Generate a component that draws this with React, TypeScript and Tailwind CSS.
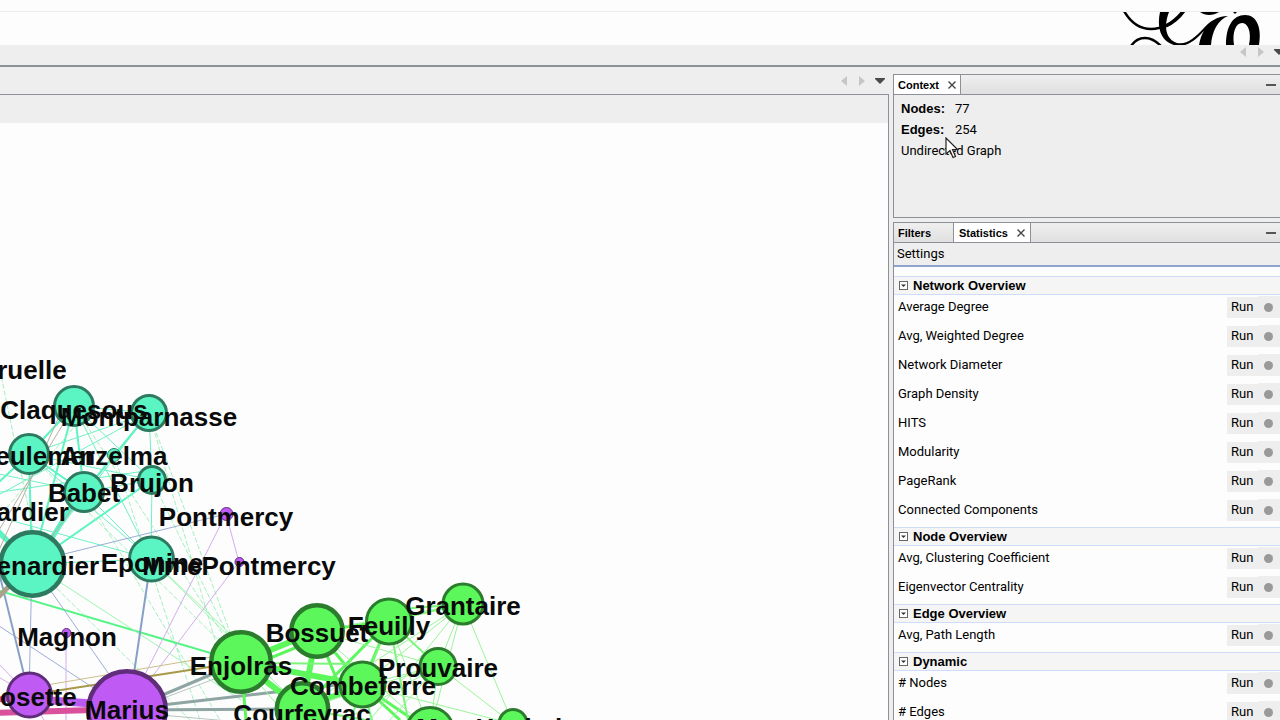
import React from 'react';

interface GraphNode {
  id: string;
  x: number;
  y: number;
  r: number;
  group: 'teal' | 'green' | 'purple';
}

interface GraphLabel {
  text: string;
  x: number;
  y: number;
}

interface StatSection {
  title: string;
  items: string[];
}

const groupColors = {
  teal: { fill: '#5bf4c3', stroke: '#2d7a61' },
  green: { fill: '#5bf75b', stroke: '#2b7c2d' },
  purple: { fill: '#bf5af5', stroke: '#602d7a' },
};

const nodes: GraphNode[] = [
  { id: 'claquesous', x: 74, y: 406, r: 21, group: 'teal' },
  { id: 'montparnasse', x: 149, y: 413, r: 19, group: 'teal' },
  { id: 'gueulemer', x: 29, y: 454, r: 21, group: 'teal' },
  { id: 'anzelma', x: 114, y: 455, r: 7, group: 'teal' },
  { id: 'brujon', x: 152, y: 480, r: 15, group: 'teal' },
  { id: 'babet', x: 84, y: 492, r: 21, group: 'teal' },
  { id: 'thenardier', x: 32.5, y: 564, r: 34, group: 'teal' },
  { id: 'eponine', x: 151.5, y: 559, r: 23.5, group: 'teal' },
  { id: 'pontmercy', x: 226.5, y: 514, r: 7, group: 'purple' },
  { id: 'mmePontmercy', x: 239.5, y: 562, r: 5, group: 'purple' },
  { id: 'magnon', x: 66.5, y: 633, r: 5, group: 'purple' },
  { id: 'cosette', x: 29.5, y: 695, r: 23.5, group: 'purple' },
  { id: 'marius', x: 127, y: 710, r: 41, group: 'purple' },
  { id: 'enjolras', x: 241, y: 662, r: 32, group: 'green' },
  { id: 'bossuet', x: 317, y: 631, r: 28, group: 'green' },
  { id: 'feuilly', x: 389, y: 621.5, r: 24, group: 'green' },
  { id: 'grantaire', x: 463, y: 604, r: 21.5, group: 'green' },
  { id: 'prouvaire', x: 438, y: 666.5, r: 19.5, group: 'green' },
  { id: 'combeferre', x: 362.5, y: 684.5, r: 24, group: 'green' },
  { id: 'courfeyrac', x: 302.5, y: 709, r: 28, group: 'green' },
  { id: 'joly', x: 430, y: 731, r: 25, group: 'green' },
  { id: 'hucheloup', x: 513, y: 723.5, r: 15.5, group: 'green' },
];

const labels: GraphLabel[] = [
  { text: 'Brevet-Gruelle', x: -23, y: 379 },
  { text: 'Claquesous', x: 74, y: 419 },
  { text: 'Montparnasse', x: 149, y: 426 },
  { text: 'Gueulemer', x: 27, y: 465 },
  { text: 'Anzelma', x: 114, y: 465 },
  { text: 'Brujon', x: 152, y: 492 },
  { text: 'Babet', x: 84, y: 502 },
  { text: 'MmeThenardier', x: -28, y: 521 },
  { text: 'Pontmercy', x: 226, y: 526 },
  { text: 'Thenardier', x: 32, y: 575 },
  { text: 'Eponine', x: 152, y: 572 },
  { text: 'MmePontmercy', x: 239, y: 575 },
  { text: 'Magnon', x: 67, y: 646 },
  { text: 'Cosette', x: 29, y: 706 },
  { text: 'Marius', x: 127, y: 719 },
  { text: 'Enjolras', x: 241, y: 675 },
  { text: 'Bossuet', x: 317, y: 642 },
  { text: 'Feuilly', x: 389, y: 635 },
  { text: 'Grantaire', x: 463, y: 615 },
  { text: 'Prouvaire', x: 438, y: 677 },
  { text: 'Combeferre', x: 363, y: 695 },
  { text: 'Courfeyrac', x: 302, y: 723 },
  { text: 'MmeHucheloup', x: 513, y: 737 },
];

// Edges grouped by stroke, each path lists its segments
const edges = [
  {
    color: '#5bf4c3',
    width: 2,
    d: 'M29 454L74 406 M74 406L84 492 M29 454L84 492 M29 454L32 564 M74 406L32 564 M149 413L84 492 M84 492L32 564 M29 454L-20 500 M32 564L-20 510 M32 564L152 480',
  },
  { color: '#5bf4c3', width: 5, d: 'M84 486L36 564 M32 564L-20 515' },
  {
    color: '#6ff0c5',
    width: 1,
    d: 'M149 413L29 454 M74 406L152 480 M29 454L152 480 M84 492L152 480 M149 413L152 480 M152 480L151 559 M149 413L32 564 M114 455L32 564 M32 564L151 559 M84 492L151 559 M74 406L149 413 M74 406L151 559 M29 454L151 559 M-20 495L152 470 M-20 505L149 413 M-20 512L151 559 M-20 470L84 492',
  },
  {
    color: '#a4f0c0',
    width: 1,
    dash: '5 2',
    d: 'M74 406L241 662 M149 413L241 662 M152 480L241 662 M29 454L241 662 M84 492L220 720 M32 564L190 720 M0 370L40 564 M114 455L200 720 M149 413L215 640 M-20 540L84 415',
  },
  { color: '#55f585', width: 2, d: 'M-10 588L241 662' },
  { color: '#9df5b0', width: 1, d: 'M151 559L302 709 M151 559L260 662 M32 564L241 700' },
  { color: '#9baed8', width: 1, d: 'M32 564L29 695 M32 564L127 700 M-10 620L127 710 M40 560L226 514' },
  { color: '#88a0c8', width: 2, d: 'M151 559L130 700 M-4 560L29 695' },
  { color: '#b5b0a0', width: 1, d: 'M74 406L-10 545 M84 492L32 564 M62 410L-10 570' },
  { color: '#aaa18a', width: 5, d: 'M-10 605L32 564' },
  { color: '#d3aeee', width: 1, d: 'M226 514L127 710 M239 562L127 710 M226 514L239 562 M66 633L66 720 M-10 655L29 695 M-10 672L29 695 M29 695L50 730' },
  { color: '#cdbf8c', width: 1, d: 'M29 688L241 652' },
  { color: '#a8994a', width: 2, d: 'M29 695L241 662' },
  { color: '#b95bf0', width: 8, d: 'M29 699L127 706' },
  { color: '#d9509d', width: 6, d: 'M-10 700L29 697 M-10 713L127 709' },
  { color: '#8fa5a3', width: 3, d: 'M127 710L241 662 M127 710L302 709 M127 709L362 682' },
  { color: '#b6c5c0', width: 1, d: 'M127 712L317 640 M127 712L240 722' },
  {
    color: '#5bf75b',
    width: 6,
    d: 'M241 662L317 631 M241 662L302 709 M241 662L362 685 M317 631L302 709 M302 709L362 685',
  },
  {
    color: '#5bf75b',
    width: 3,
    d: 'M317 631L362 685 M317 631L389 621 M317 631L345 700 M389 621L302 709 M389 621L362 685 M241 662L246 720 M362 685L430 731 M241 670L317 639 M362 685L400 720',
  },
  {
    color: '#7af57a',
    width: 2,
    d: 'M389 621L463 604 M241 663L362 664 M389 621L408 720 M389 621L350 720 M372 720L362 685 M302 709L430 731 M389 621L438 666 M389 610L463 604',
  },
  {
    color: '#9af59a',
    width: 1,
    d: 'M463 604L302 709 M463 604L317 631 M463 604L430 731 M463 604L438 666 M463 604L362 685 M463 604L370 720 M463 604L513 724 M438 666L362 685 M438 666L430 731 M438 666L317 631 M438 666L345 720 M438 666L302 709 M438 666L513 724 M317 631L430 731 M362 685L513 724 M389 621L430 731 M438 666L390 720 M241 662L290 720',
  },
];

const sections: StatSection[] = [
  {
    title: 'Network Overview',
    items: [
      'Average Degree',
      'Avg, Weighted Degree',
      'Network Diameter',
      'Graph Density',
      'HITS',
      'Modularity',
      'PageRank',
      'Connected Components',
    ],
  },
  { title: 'Node Overview', items: ['Avg, Clustering Coefficient', 'Eigenvector Centrality'] },
  { title: 'Edge Overview', items: ['Avg, Path Length'] },
  { title: 'Dynamic', items: ['# Nodes', '# Edges'] },
];

const TabArrows: React.FC = () => (
  <div className="grid grid-cols-[18px_18px_18px] items-center justify-items-center">
    <button type="button" aria-label="Previous tab">
      <svg className="h-2.5 w-1.5" viewBox="0 0 6 10">
        <path d="M6 0V10L0 5Z" fill="#c6c6c6" />
      </svg>
    </button>
    <button type="button" aria-label="Next tab">
      <svg className="h-2.5 w-1.5" viewBox="0 0 6 10">
        <path d="M0 0V10L6 5Z" fill="#c6c6c6" />
      </svg>
    </button>
    <button type="button" aria-label="Show opened tabs">
      <svg className="h-1.5 w-2.5" viewBox="0 0 10 6">
        <path d="M0 0H10V1L5 6L0 1Z" fill="#4a4a4a" />
      </svg>
    </button>
  </div>
);

const CloseIcon: React.FC = () => (
  <svg className="size-2" viewBox="0 0 8 8" stroke="#444" strokeWidth={1.4}>
    <path d="M0.5 0.5L7.5 7.5M7.5 0.5L0.5 7.5" />
  </svg>
);

const MinimizeButton: React.FC = () => (
  <button type="button" aria-label="Minimize" className="ml-auto flex w-[18px] items-center justify-center">
    <span className="h-0.5 w-2.5 bg-[#555]" />
  </button>
);

const Logo: React.FC = () => (
  <svg className="mr-4 h-[33px] w-[144px]" viewBox="1120 12 144 33" fill="none" stroke="#000">
    <path d="M1124 11C1131 23 1140 29 1151 29C1163 29 1174 22 1183 11" strokeWidth={2.5} />
    <path d="M1131 46C1135 40 1140 38 1145 38C1151 38 1156 41 1161 46" strokeWidth={2.5} />
    <path
      d="M1160 12H1169C1165 22 1163 38 1177 43C1188 45 1196 36 1203 29C1209 22 1217 16 1228 16C1218 20 1212 31 1211 45H1199C1200 40 1201 35 1204 31C1197 38 1190 46 1178 46C1159 43 1157 26 1160 12Z"
      fill="#000"
      stroke="none"
    />
    <path d="M1166 26C1173 23 1179 18 1184 11" strokeWidth={3} />
    <path d="M1200 12C1205 16 1213 16 1219 12Z" fill="#000" stroke="none" />
    <path d="M1233 12H1237L1235 14Z" fill="#000" stroke="none" />
    <path
      d="M1226 45C1226 26 1233 15 1245 15C1257 15 1262 28 1259 45H1249C1252 30 1247 23 1242 23C1236 23 1232 32 1234 45Z"
      fill="#000"
      stroke="none"
    />
  </svg>
);

const NetworkGraph: React.FC = () => (
  <svg
    className="block h-full w-full"
    viewBox="0 123 888 597"
    preserveAspectRatio="xMinYMin slice"
    role="img"
    aria-label="Network graph"
  >
    {edges.map((edge, index) => (
      <path
        key={index}
        d={edge.d}
        stroke={edge.color}
        strokeWidth={edge.width}
        strokeDasharray={edge.dash}
        fill="none"
      />
    ))}
    {nodes.map((node) => {
      const strokeWidth = node.r > 25 ? 4.5 : node.r > 10 ? 3 : 1;
      return (
        <circle
          key={node.id}
          cx={node.x}
          cy={node.y}
          r={node.r - strokeWidth / 2}
          fill={groupColors[node.group].fill}
          stroke={groupColors[node.group].stroke}
          strokeWidth={strokeWidth}
        />
      );
    })}
    {labels.map((label) => (
      <text
        key={label.text}
        x={label.x}
        y={label.y}
        textAnchor="middle"
        className="fill-[#0a0a0a] font-['Liberation_Sans',sans-serif] text-[26px] font-bold"
      >
        {label.text}
      </text>
    ))}
  </svg>
);

const ContextPanel: React.FC = () => (
  <section className="flex h-36 shrink-0 flex-col border-y border-l border-[#8d9096] bg-[#eeeeee]">
    <div role="tablist" className="flex h-5 shrink-0 border-b border-[#8d9096] bg-linear-to-b from-[#efefef] to-[#e0e0e0]">
      <button
        type="button"
        role="tab"
        aria-selected="true"
        className="flex items-center gap-[9px] border-r border-[#8d9096] bg-white px-1 pt-px font-['Liberation_Sans',sans-serif] text-[11px] font-bold"
      >
        Context
        <CloseIcon />
      </button>
      <MinimizeButton />
    </div>
    <div className="relative px-[7px] pt-[3px] text-[13px] leading-[21px]">
      <dl className="grid grid-cols-[54px_1fr]">
        <dt className="font-['Liberation_Sans',sans-serif] text-[13px] leading-[21px] font-bold">Nodes:</dt>
        <dd>77</dd>
        <dt className="font-['Liberation_Sans',sans-serif] text-[13px] leading-[21px] font-bold">Edges:</dt>
        <dd>254</dd>
      </dl>
      <p>Undirected Graph</p>
      <svg className="absolute top-[42px] left-[51px] h-[22px] w-3.5" viewBox="0 0 14 22">
        <path d="M1 1V17L5 13.5L8 20.5L10.5 19.5L7.5 12.5H12.5Z" fill="#fff" stroke="#222" strokeWidth={1.2} />
      </svg>
    </div>
  </section>
);

const StatisticsPanel: React.FC = () => (
  <section className="flex min-h-0 flex-1 flex-col border-t border-l border-[#8d9096] bg-[#fdfdfd]">
    <div
      role="tablist"
      className="flex h-5 shrink-0 border-b border-[#8d9096] bg-linear-to-b from-[#efefef] to-[#e0e0e0] font-['Liberation_Sans',sans-serif] text-[11px] font-bold"
    >
      <button type="button" role="tab" aria-selected="false" className="w-[60px] border-r border-[#8d9096] px-1 pt-px text-left">
        Filters
      </button>
      <button
        type="button"
        role="tab"
        aria-selected="true"
        className="flex items-center gap-[9px] border-r border-[#8d9096] bg-white px-[5px] pt-px"
      >
        Statistics
        <CloseIcon />
      </button>
      <MinimizeButton />
    </div>
    <div className="flex h-6 shrink-0 items-center border-b-2 border-[#8fa3cf] bg-[#eeeeee] px-[3px]">
      <button type="button">Settings</button>
    </div>
    <div className="min-h-0 flex-1 overflow-hidden pt-[9px]">
      {sections.map((section) => (
        <div key={section.title}>
          <h3 className="h-[19px] border-y border-[#cddcf8] bg-[#f5f5f5]">
            <button
              type="button"
              aria-expanded="true"
              className="flex h-full items-center gap-[5px] px-[5px] font-['Liberation_Sans',sans-serif] text-[13px] leading-4 font-bold"
            >
              <svg className="size-[9px]" viewBox="0 0 9 9">
                <rect x="0.5" y="0.5" width="8" height="8" fill="#fff" stroke="#666" />
                <path d="M2 3.5H7L4.5 6Z" fill="#333" />
              </svg>
              {section.title}
            </button>
          </h3>
          <ul>
            {section.items.map((item) => (
              <li key={item} className="flex h-[29px] items-center pb-[5px] pl-1">
                <span className="flex-1">{item}</span>
                <button type="button" className="h-[21px] w-[31px] bg-[#eeeeee] px-1 text-left">
                  Run
                </button>
                <button
                  type="button"
                  aria-label={`${item} report`}
                  className="flex h-[22px] w-[22px] items-center bg-[#eeeeee] pl-1.5"
                >
                  <span className="size-[9px] rounded-full bg-[#999]" />
                </button>
              </li>
            ))}
          </ul>
        </div>
      ))}
    </div>
  </section>
);

const App: React.FC = () => {
  return (
    <div className="flex h-screen flex-col overflow-hidden bg-[#eeeeee] font-[Roboto,sans-serif] text-[13px] text-black">
      <header className="shrink-0 bg-[#fdfdfd]">
        <div className="h-3 border-b border-[#ececec]" />
        <div className="flex h-[33px] justify-end">
          <Logo />
        </div>
      </header>
      <div className="-mr-2 flex h-[22px] shrink-0 items-start justify-end border-b-2 border-[#8d9096] pt-0.5">
        <TabArrows />
      </div>
      <main className="flex min-h-0 flex-1 gap-1">
        <div className="flex min-w-0 flex-1 flex-col">
          <div className="flex h-[27px] shrink-0 items-center justify-end">
            <TabArrows />
          </div>
          <div className="flex min-h-0 flex-1 flex-col border-t border-r border-[#8d9096]">
            <div className="h-7 shrink-0 bg-[#eeeeee]" />
            <div className="min-h-0 flex-1 overflow-hidden bg-[#fdfdfd]">
              <NetworkGraph />
            </div>
          </div>
        </div>
        <aside className="flex w-[387px] shrink-0 flex-col gap-1 pt-[7px]">
          <ContextPanel />
          <StatisticsPanel />
        </aside>
      </main>
    </div>
  );
};

export default App;
